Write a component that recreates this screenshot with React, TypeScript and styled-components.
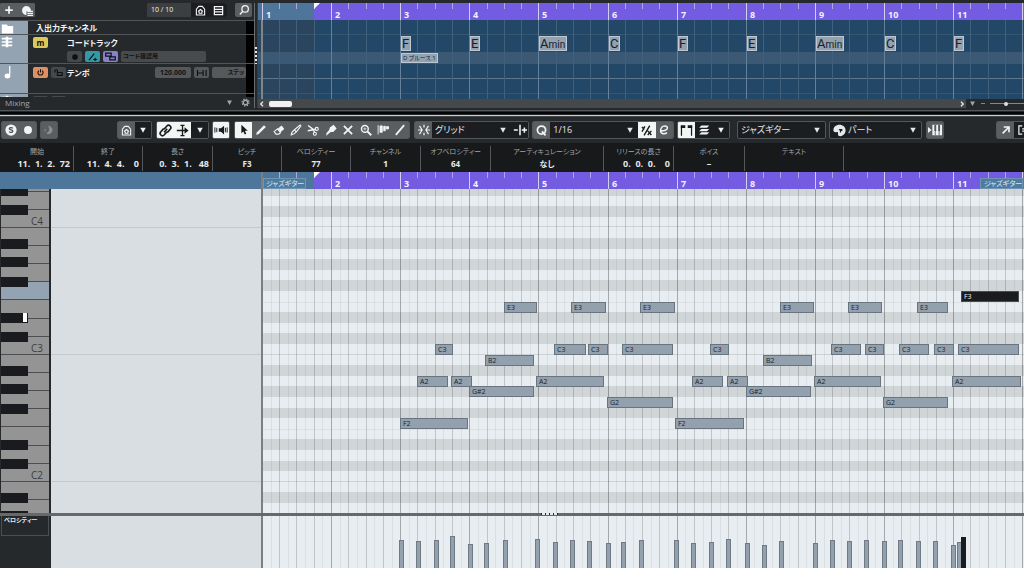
import React from "react";
import styled, { createGlobalStyle, css } from "styled-components";

const GlobalStyle = createGlobalStyle`
  * { box-sizing: border-box; }
  body {
    margin: 0;
    background: #25292c;
    font-family: "Open Sans", "Noto Sans CJK JP", sans-serif;
    font-feature-settings: "palt";
    color: #e6e8ea;
    overflow: hidden;
  }
  button, select, input { font: inherit; color: inherit; margin: 0; padding: 0; border: 0; }
`;

/* ---------- timeline data ---------- */

const BAR = 553 / 8;
const BAR_COUNT = 28;
const LAST_NAMED_BAR = 11;
const barX = (bar: number, origin: number) => Math.floor(262.4 + (bar - 1) * BAR - origin);
const rowTop = (pitch: number) => Math.round(155 - (pitch - 48) * 10.6);

const PITCH: Record<string, number> = { F2: 41, G2: 43, "G#2": 44, A2: 45, B2: 47, C3: 48, E3: 52, F3: 53 };

type NoteData = { name: string; x: number; w: number; vel: number; selected?: boolean };
const notes: NoteData[] = [
  { name: "F2", x: 137, w: 68, vel: 28 },
  { name: "A2", x: 154, w: 31, vel: 27 },
  { name: "C3", x: 172, w: 18, vel: 28 },
  { name: "A2", x: 188, w: 21, vel: 32 },
  { name: "G#2", x: 206, w: 65, vel: 24 },
  { name: "B2", x: 222, w: 49, vel: 25 },
  { name: "E3", x: 241, w: 33, vel: 28 },
  { name: "A2", x: 273, w: 68, vel: 29 },
  { name: "C3", x: 291, w: 32, vel: 26 },
  { name: "E3", x: 308, w: 35, vel: 28 },
  { name: "C3", x: 325, w: 20, vel: 27 },
  { name: "G2", x: 344, w: 66, vel: 25 },
  { name: "C3", x: 359, w: 51, vel: 26 },
  { name: "E3", x: 377, w: 35, vel: 28 },
  { name: "F2", x: 412, w: 69, vel: 28 },
  { name: "A2", x: 429, w: 31, vel: 25 },
  { name: "C3", x: 447, w: 19, vel: 26 },
  { name: "A2", x: 464, w: 21, vel: 29 },
  { name: "G#2", x: 483, w: 65, vel: 25 },
  { name: "B2", x: 500, w: 49, vel: 23 },
  { name: "E3", x: 517, w: 34, vel: 27 },
  { name: "A2", x: 551, w: 67, vel: 25 },
  { name: "C3", x: 568, w: 30, vel: 28 },
  { name: "E3", x: 585, w: 34, vel: 27 },
  { name: "C3", x: 602, w: 19, vel: 28 },
  { name: "G2", x: 620, w: 65, vel: 27 },
  { name: "C3", x: 636, w: 30, vel: 28 },
  { name: "E3", x: 654, w: 31, vel: 27 },
  { name: "C3", x: 671, w: 20, vel: 27 },
  { name: "A2", x: 689, w: 69, vel: 23 },
  { name: "C3", x: 695, w: 61, vel: 26 },
  { name: "F3", x: 698, w: 58, vel: 31, selected: true },
];

const chords = [
  { root: "F", bar: 3 },
  { root: "E", bar: 4 },
  { root: "A", kind: "min", bar: 5 },
  { root: "C", bar: 6 },
  { root: "F", bar: 7 },
  { root: "E", bar: 8 },
  { root: "A", kind: "min", bar: 9 },
  { root: "C", bar: 10 },
  { root: "F", bar: 11 },
];

const infoFields = [
  { label: "開始", value: "11.  1.  2.  72", w: 73, right: true },
  { label: "終了", value: "11.  4.  4.    0", w: 69, right: true },
  { label: "長さ", value: "0.  3.  1.   48", w: 70, right: true },
  { label: "ピッチ", value: "F3", w: 69, small: true },
  { label: "ベロシティー", value: "77", w: 69, small: true },
  { label: "チャンネル", value: "1", w: 70 },
  { label: "オフベロシティー", value: "64", w: 70, small: true },
  { label: "アーティキュレーション", value: "なし", w: 113, small: true },
  { label: "リリースの長さ", value: "0.  0.  0.    0", w: 70, right: true },
  { label: "ボイス", value: "–", w: 71 },
  { label: "テキスト", value: "", w: 99 },
];

/* ---------- icons ---------- */

const glyphs: Record<string, React.ReactNode> = {
  plus: <path d="M8 2v12M2 8h12" stroke="currentColor" strokeWidth="2.8" />,
  addTrack: (
    <>
      <path d="M8 2.5a5.5 5.5 0 1 0 0 11V9h5.400A5.500 5.500 0 0 0 8 2.500z" fill="currentColor" />
      <path d="M9 9h7M9 11.500h7M9 14h7" stroke="currentColor" strokeWidth="1.500" />
    </>
  ),
  house: <path d="M2 14.500V6l3.500-4h5L14 6v8.500zM4.500 9.500 8 6.500l3.500 3M6 9.500v2.500h4V9.500" fill="none" stroke="currentColor" strokeWidth="1.600" />,
  list: <path d="M2 2.500h12v11.500H2zM2 6.500h12M2 10h12" fill="none" stroke="currentColor" strokeWidth="1.800" />,
  search: (
    <>
      <circle cx="9.500" cy="6.500" r="4.300" fill="none" stroke="currentColor" strokeWidth="1.700" />
      <path d="M6.500 9.500 2.500 14" stroke="currentColor" strokeWidth="1.900" />
    </>
  ),
  folder: <path d="M1 3h6l1.500 2H15v9H1z" fill="currentColor" />,
  chordTrack: (
    <>
      <path d="M1 3.500h14M1 8h14M1 12.500h14" stroke="currentColor" strokeWidth="2.200" />
      <path d="M8 1v14" stroke="currentColor" strokeWidth="3.400" />
    </>
  ),
  tempo: <path d="M10 1v10M10 12.500a2.600 2.100 0 1 1-5.200 0 2.600 2.100 0 1 1 5.200 0z" fill="currentColor" stroke="currentColor" strokeWidth="1.400" />,
  dot: <circle cx="8" cy="8" r="4.500" fill="currentColor" />,
  solo: (
    <>
      <circle cx="8" cy="8" r="7.500" fill="currentColor" />
      <path d="M10.500 5.800C9.500 4.400 5.700 4.500 5.700 6.300c0 2 4.800 1.200 4.800 3.300 0 1.900-3.900 2-5 .5" fill="none" stroke="#4b4e51" strokeWidth="1.700" />
    </>
  ),
  moon: <path d="M7.500 3a5 5 0 1 1-2.500 9.500 6 6 0 0 0 2.500-9.500zM2.500 6.500a2.500 2.500 0 0 1 0 3.500" fill="currentColor" stroke="currentColor" />,
  link: <path d="M6.500 9.800 9.800 6.200M6.500 6.500 9.500 3.200a2.400 2.400 0 0 1 3.500 3.400L10 10M9.500 9.500l-3 3.300A2.400 2.400 0 0 1 3 9.400L6 6" fill="none" stroke="currentColor" strokeWidth="1.700" />,
  insert: (
    <>
      <path d="M1 8h10M5.500 1.800h5M5.500 14.200h5M8 2v12" stroke="currentColor" strokeWidth="1.600" fill="none" />
      <path d="M10.500 4 15.500 8l-5 4z" fill="currentColor" />
    </>
  ),
  speaker: (
    <>
      <path d="M5.500 6H8l3.500-3v10L8 10H5.500z" fill="currentColor" />
      <path d="M1 5v6M3.200 5.500v5M13 5.500v5M15 5v6" stroke="currentColor" strokeWidth="1.100" />
    </>
  ),
  arrow: <path d="M4.500 1v11.300l2.700-2.400 1.800 4 2-1-1.800-3.800h3.800z" fill="currentColor" />,
  pencil: <path d="m1.500 14.500 1.200-3.500L12 1.500 14.500 4 5 13.300z" fill="currentColor" />,
  eraser: (
    <>
      <path d="m6.500 6 5-4 3.500 4.500-5 4.500z" fill="currentColor" />
      <path d="m6 6.500-4.500 3.500L4 13.500h3.700l2.300-2z" fill="none" stroke="currentColor" strokeWidth="1.500" />
    </>
  ),
  knife: <path d="M1.500 14.500c.5-2.700 1.500-4.700 4-6.500L13.500 1.500l1 1.200-6 7.800c-2 2.200-4 3.500-7 4zM6 8l2.500 2.500" fill="none" stroke="currentColor" strokeWidth="1.500" />,
  scissors: (
    <>
      <path d="M1.500 2 10 8.500M1 9l11-2M8.500 8l1.500 3" stroke="currentColor" strokeWidth="1.900" />
      <circle cx="13" cy="6.500" r="2" fill="none" stroke="currentColor" strokeWidth="1.500" />
      <circle cx="10.500" cy="13" r="2" fill="none" stroke="currentColor" strokeWidth="1.500" />
    </>
  ),
  glue: <path d="m6.500 4.500 5-3.500 4 5-4.500 4.500H7.500L4 13.500 1.500 15.500l.500-3.500L5.500 8z" fill="currentColor" />,
  mute: <path d="m2.500 2.500 11 11M13.500 2.500l-11 11" stroke="currentColor" strokeWidth="2.400" />,
  zoom: (
    <>
      <circle cx="6.500" cy="6.500" r="4.500" fill="none" stroke="currentColor" strokeWidth="2" />
      <path d="m9.500 9.500 5.500 5.500" stroke="currentColor" strokeWidth="2.600" />
      <path d="M4.500 6.500h4M6.500 4.500v4" stroke="currentColor" />
    </>
  ),
  comp: <path d="M1.500 1.500v12.500M4 2.500h3v8.500H4zM9 3h2v6H9zM12.500 3.500h3v3h-3z" fill="currentColor" stroke="currentColor" strokeWidth="1.200" />,
  line: <path d="M2.500 14.500 13.500 1.500" stroke="currentColor" strokeWidth="2.400" />,
  snap: (
    <>
      <path d="M8 1v3.500M8 11.500V15" stroke="currentColor" strokeWidth="1.700" />
      <path d="M2 2.500 5.500 8 2 13.500M14 2.500 10.500 8l3.500 5.500M0 8h5M11 8h5" fill="none" stroke="currentColor" strokeWidth="1.600" />
    </>
  ),
  nudge: <path d="M8 2v12M1 8h4.500M10 8h6M13 5v6" stroke="currentColor" strokeWidth="1.800" />,
  quantize: <path d="M8 2.500a5 5 0 1 0 0 10 5 5 0 1 0 0-10zM8.500 9l4.500 5" fill="none" stroke="currentColor" strokeWidth="2.200" />,
  ratio: <path d="M2.500 3.500 5 7M2.500 9.500 6 3M12 2 5 14M9.500 8.500l4.500 5M14 8.500l-4.500 5" fill="none" stroke="currentColor" strokeWidth="1.700" />,
  edit: <path d="M3.500 9c4.500.5 9-1 9-3.800C12.500 3.500 11 2.500 9 2.500 6 2.500 3.500 5.200 3.500 8.800c0 4.500 5 5.500 8.500 2.700" fill="none" stroke="currentColor" strokeWidth="2" />,
  parts: (
    <>
      <path d="M1.800 2v12.500M14.200 2v12.500" stroke="currentColor" strokeWidth="1.500" />
      <path d="M1 1.500h5.500V5H1zM9.500 1.500H15V5H9.500z" fill="currentColor" />
    </>
  ),
  layers: <path d="m1.500 5 3-3h10.500l-3 3zM1.500 9.500l3-3h10.500l-3 3zM1.500 14l3-3h10.500l-3 3z" fill="currentColor" />,
  keys: (
    <>
      <path d="M0 4.500 4 8l-4 3.500z" fill="currentColor" />
      <path d="M5 2h11v12H5z" fill="currentColor" />
      <path d="M8.300 2v7M12.700 2v7" stroke="#55585b" strokeWidth="2.200" />
      <path d="M8.300 8v6M12.700 8v6" stroke="#55585b" />
    </>
  ),
  open: <path d="M3.500 12.500 11 5M5 4h7v7" fill="none" stroke="currentColor" strokeWidth="2.200" />,
  window: <path d="M7 2.500H2.500v11H7M7 6.500h7M7 9.500h7" fill="none" stroke="currentColor" strokeWidth="1.600" />,
  palette: <path d="M8 1C3.500 1 .5 4 .5 7.500c0 2.400 2 3.200 3.700 2.500 1.500-.6 2.300.4 2 1.700-.5 2 .8 3.500 3 3.300 3.400-.5 6.300-3.500 6.300-7C15.500 3.800 12.300 1 8 1zM7 6h4.500v2.500h-1.500v2H8.500v-2z" fill="currentColor" fillRule="evenodd" />,
  down: <path d="M2.500 3.500h11L8 13.500z" fill="currentColor" />,
  gear: (
    <>
      <circle cx="8" cy="8" r="4" fill="none" stroke="currentColor" strokeWidth="2.600" />
      <circle cx="8" cy="8" r="6.200" fill="none" stroke="currentColor" strokeWidth="2" strokeDasharray="2.600 2.270" />
    </>
  ),
  power: <path d="M5 4.500a4.600 4.600 0 1 0 6 0M8 2v6" fill="none" stroke="currentColor" strokeWidth="1.900" />,
  lock: <path d="M1.500 8V5.500a2.300 2.300 0 0 1 4.600 0V8M6 8h8.500v5H6z" fill="none" stroke="currentColor" strokeWidth="2" />,
  chordEdit: <path d="M1.500 13 10 2.500M8.500 12h6M11.500 9v5.500" stroke="currentColor" strokeWidth="1.800" />,
  voicing: <path d="M1 3h8v4.500H1zM7 8.500h8V13H7z" fill="none" stroke="currentColor" strokeWidth="1.700" />,
  range: <path d="M2 4v8M2 8h7M9.500 4v8M13.500 4v8" stroke="currentColor" strokeWidth="1.500" />,
  left: <path d="M10 3.500 5.500 8l4.500 4.500" fill="none" stroke="currentColor" strokeWidth="2.600" />,
  right: <path d="m6 3.500 4.500 4.500L6 12.500" fill="none" stroke="currentColor" strokeWidth="2.600" />,
};

const Svg = styled.svg<{ $s: number }>`
  width: ${(p) => p.$s}px;
  height: ${(p) => p.$s}px;
  flex: none;
  display: block;
`;
const Icon = ({ name, size = 12 }: { name: string; size?: number }) => (
  <Svg $s={size} viewBox="0 0 16 16" aria-hidden="true">{glyphs[name]}</Svg>
);

/* ---------- shared parts ---------- */

const Shell = styled.main`
  min-height: 100vh;
  display: flex;
  flex-direction: column;
  overflow: hidden;
`;

type Tone = "grey" | "dark" | "white";
const tones = {
  grey: css`background: #5b5e61; color: #f2f3f4;`,
  dark: css`background: #1b1d20; color: #f2f3f4;`,
  white: css`background: #f3f4f4; color: #17191b;`,
};
const Tool = styled.button<{ $tone?: Tone; $dim?: boolean }>`
  ${(p) => tones[p.$tone ?? "grey"]}
  ${(p) => p.$dim && css`color: #8e9194;`}
  flex: 1 1 18px;
  display: flex;
  align-items: center;
  justify-content: center;
`;
const Group = styled.div<{ $w: number; $before?: number }>`
  flex: none;
  display: flex;
  width: ${(p) => p.$w}px;
  height: 18px;
  margin-left: ${(p) => p.$before ?? 3}px;
  border: 1px solid #54575a;
  border-radius: 2px;
  overflow: hidden;
  background: #1b1d20;
`;

/* ---------- project zone ---------- */

const Project = styled.section`
  display: flex;
  height: 108px;
  padding-top: 3px;
  flex: none;
  background: #25292c;
`;
const TrackList = styled.div`
  width: 254px;
  flex: none;
  display: flex;
  flex-direction: column;
`;
const ListHeader = styled.header`
  height: 17px;
  display: flex;
  align-items: flex-start;
  padding-right: 2px;
`;
const HeaderGroup = styled.div<{ $w: number }>`
  display: flex;
  width: ${(p) => p.$w}px;
  height: 14px;
  background: #55585b;
  border-radius: 2px;
  overflow: hidden;
  color: #f0f1f2;
`;
const Counter = styled.span`
  width: 44px;
  padding-left: 4px;
  font-size: 7px;
  line-height: 14px;
  background: #3b3f42;
`;
const Spring = styled.div`flex: 1;`;
const Gap = styled.div`width: 8px;`;

const Rows = styled.div`
  flex: 1;
  min-height: 0;
  overflow: hidden;
  background: linear-gradient(to right, #25292c 246px, #000 246px);
`;
const TrackRow = styled.div<{ $h: number }>`
  display: flex;
  height: ${(p) => p.$h}px;
  border-top: 1px solid #515558;
`;
const Gutter = styled.div`
  width: 28px;
  padding: 1px 0 0 1px;
  background: #93a3b2;
  color: #fff;
`;
const TrackBody = styled.div<{ $pad?: number }>`
  flex: 1;
  display: grid;
  grid-template-columns: 34px 1fr;
  grid-auto-rows: min-content;
  row-gap: 3px;
  padding: ${(p) => p.$pad ?? 2}px 8px 0 5px;
  overflow: hidden;
`;
const TrackName = styled.span`
  font-size: 8px;
  font-weight: 700;
  line-height: 11px;
  white-space: nowrap;
  color: #f4f5f5;
`;
const FolderName = styled(TrackName)`
  padding: 1px 0 0 8px;
`;
const Line = styled.div`
  display: flex;
  gap: 3px;
  min-width: 0;
`;
const Chip = styled.button<{ $bg?: string }>`
  flex: none;
  width: 15px;
  height: 11px;
  display: flex;
  align-items: center;
  justify-content: center;
  background: ${(p) => p.$bg ?? "#46494c"};
  color: #0e0f10;
  border-radius: 2px;
  font-size: 8px;
  font-weight: 700;
  line-height: 11px;
`;
const Field = styled.input<{ $w: number; $align?: string }>`
  width: ${(p) => p.$w}px;
  flex: none;
  height: 11px;
  && { padding: 0 2px; }
  background: ${(p) => (p.$align ? "#56595c" : "#484b4e")};
  color: #121315;
  border-radius: 2px;
  font-size: ${(p) => (p.$align === "center" ? 7 : 6)}px;
  font-weight: 700;
  line-height: 11px;
  text-align: ${(p) => p.$align ?? "left"};
`;
const TempoLine = styled(Line)`
  justify-content: space-between;
`;
const ListFooter = styled.footer`
  height: 11px;
  display: flex;
  align-items: center;
  gap: 8px;
  padding: 0 4px 0 5px;
  font-size: 8px;
  line-height: 11px;
  color: #a4a7a9;
`;
const Splitter = styled.div`
  width: 4px;
  flex: none;
  border-left: 1px solid #696c6e;
  border-right: 1px solid #3a3d40;
  background: #25292c;
  padding-top: 44px;
`;
const Grip = styled.div`
  height: 17px;
  width: 2px;
  background: repeating-linear-gradient(#e5e5e5 0 2px, #25292c 2px 4px);
`;
const Arrange = styled.div`
  flex: 1;
  min-width: 0;
  display: flex;
  flex-direction: column;
`;

const RulerBox = styled.div`
  height: 17px;
  flex: none;
  overflow: hidden;
  background: #4e769b;
`;
const Drawing = styled.svg`
  display: block;
  width: 100%;
  height: 100%;
`;
const RulerText = styled.text`
  font-size: 9px;
  font-weight: 700;
  fill: #f3f1fb;
`;

const bars = Array.from({ length: BAR_COUNT }, (_, i) => i + 1);

const Ruler = ({ origin, hideFirst }: { origin: number; hideFirst?: boolean }) => (
  <RulerBox>
    <Drawing shapeRendering="crispEdges">
      <rect x={314 - origin} y="0" width="100%" height="17" fill="#735be2" />
      {bars.map((b) => (
        <g key={b}>
          <rect x={barX(b, origin)} y="0" width="1" height="17" fill="#d3cdf0" />
          {[0.25, 0.5, 0.75].map((q) => (
            <rect key={q} x={barX(b + q, origin)} y="0" width="1" height="6" fill="#aea6e6" />
          ))}
          {b <= LAST_NAMED_BAR && !(hideFirst && b === 1) && (
            <RulerText x={barX(b, origin) + 4} y="15">{b}</RulerText>
          )}
        </g>
      ))}
      <path d={`M${314 - origin} 0h6l-6 6z`} fill="#fff" shapeRendering="auto" />
    </Drawing>
  </RulerBox>
);

const Lanes = styled.div`
  position: relative;
  flex: 1;
  min-height: 0;
  overflow: hidden;
  background: #234767;
`;
const Chord = styled.div<{ $x: number }>`
  position: absolute;
  left: ${(p) => p.$x}px;
  top: 16px;
  height: 15px;
  padding: 0 1px 0 0;
  border: 1px solid #bdc8d2;
  background: #93a2b0;
  color: #15202a;
  font-size: 13px;
  line-height: 14px;
  font-family: Roboto, sans-serif;
`;
const ChordKind = styled.span`font-size: 10px;`;
const Scale = styled(Chord)`
  top: 33px;
  height: 10px;
  padding: 0 1px;
  font-size: 6px;
  line-height: 8px;
  font-family: "Open Sans", "Noto Sans CJK JP", sans-serif;
  white-space: nowrap;
`;
const ScrollRow = styled.div`
  height: 9px;
  flex: none;
  display: flex;
  align-items: center;
  color: #e8e9ea;
`;
const ScrollTrack = styled.div`
  flex: 1;
  height: 9px;
  display: flex;
  align-items: center;
  gap: 3px;
  background: #46494c;
`;
const Bare = styled.button`
  background: none;
  display: flex;
`;
const Thumb = styled.div`
  width: 23px;
  height: 6px;
  border-radius: 2px;
  background: #f1f1f1;
`;
const ZoomTools = styled.div`
  width: 58px;
  padding-left: 3px;
  display: flex;
  align-items: center;
  gap: 5px;
  color: #a4a7a9;
`;
const Minus = styled.span`
  width: 4px;
  height: 1px;
  background: #85888a;
`;
const Range = styled.input`
  appearance: none;
  flex: 1;
  min-width: 0;
  height: 1px;
  background: #85888a;
  &::-webkit-slider-thumb {
    appearance: none;
    width: 4px;
    height: 4px;
    border-radius: 2px;
    background: #e0e0e0;
  }
`;

const trackLines = [[14, "#365772"], [58, "#5d788c"], [73, "#365772"]] as const;

const ProjectZone = () => (
  <Project>
    <TrackList>
      <ListHeader>
        <HeaderGroup $w={35}>
          <Tool aria-label="Add track"><Icon name="plus" size={10} /></Tool>
          <Tool aria-label="Track preset"><Icon name="addTrack" size={13} /></Tool>
        </HeaderGroup>
        <Spring />
        <HeaderGroup $w={80}>
          <Counter>10 / 10</Counter>
          <Tool $tone="dark" aria-label="Home"><Icon name="house" size={11} /></Tool>
          <Tool $tone="dark" aria-label="List"><Icon name="list" size={11} /></Tool>
        </HeaderGroup>
        <Gap />
        <HeaderGroup $w={17}>
          <Tool aria-label="Search"><Icon name="search" size={12} /></Tool>
        </HeaderGroup>
      </ListHeader>
      <Rows>
        <TrackRow $h={14}>
          <Gutter><Icon name="folder" size={13} /></Gutter>
          <FolderName>入出力チャンネル</FolderName>
        </TrackRow>
        <TrackRow $h={29}>
          <Gutter><Icon name="chordTrack" size={12} /></Gutter>
          <TrackBody>
            <Chip $bg="#dcc75a">m</Chip>
            <TrackName>コードトラック</TrackName>
            <span />
            <Line>
              <Chip aria-label="Record"><Icon name="dot" size={10} /></Chip>
              <Chip $bg="#3499a5" aria-label="Edit chords"><Icon name="chordEdit" size={10} /></Chip>
              <Chip $bg="#8682c8" aria-label="Voicing"><Icon name="voicing" size={11} /></Chip>
              <Field $w={85} aria-label="Chord target" defaultValue="コード確認用" />
            </Line>
          </TrackBody>
        </TrackRow>
        <TrackRow $h={30}>
          <Gutter><Icon name="tempo" size={14} /></Gutter>
          <TrackBody $pad={3}>
            <Line>
              <Chip $bg="#e08f62" aria-label="Activate"><Icon name="power" size={9} /></Chip>
              <Chip aria-label="Lock"><Icon name="lock" size={9} /></Chip>
            </Line>
            <TempoLine>
              <TrackName>テンポ</TrackName>
              <Line>
                <Field $w={36} $align="center" aria-label="Tempo" defaultValue="120.000" />
                <Chip $bg="#56595c" aria-label="Range"><Icon name="range" size={12} /></Chip>
                <Field $w={34} $align="right" aria-label="Curve" defaultValue="ステッ" />
              </Line>
            </TempoLine>
          </TrackBody>
        </TrackRow>
        <TrackRow $h={10}>
          <Gutter><Icon name="chordTrack" size={12} /></Gutter>
          <TrackBody><Line><Chip /><Chip /></Line></TrackBody>
        </TrackRow>
      </Rows>
      <ListFooter>
        Mixing
        <Spring />
        <Icon name="down" size={7} />
        <Icon name="gear" size={9} />
      </ListFooter>
    </TrackList>
    <Splitter><Grip /></Splitter>
    <Arrange>
      <Ruler origin={258} />
      <Lanes>
        <Drawing shapeRendering="crispEdges">
          <rect width="56" height="100%" fill="#2b455f" />
          <rect y="32" width="100%" height="12" fill="#3b5875" />
          {trackLines.map(([y, c]) => <rect key={y} y={y} width="100%" height="1" fill={c} />)}
          {bars.map((b) => (
            <g key={b}>
              <rect x={barX(b, 258)} width="1" height="100%" fill="#64809a" />
              {[0.25, 0.5, 0.75].map((q) => (
                <rect key={q} x={barX(b + q, 258)} width="1" height="100%" fill="#41607c" />
              ))}
            </g>
          ))}
          <rect x="3" width="2" height="100%" fill="#7f8689" />
        </Drawing>
        {chords.map((c) => (
          <Chord key={c.bar} $x={barX(c.bar, 258) + 1}>
            {c.root}
            {c.kind && <ChordKind>{c.kind}</ChordKind>}
          </Chord>
        ))}
        <Scale $x={barX(3, 258) + 1}>D ブルース 1</Scale>
      </Lanes>
      <ScrollRow>
        <ScrollTrack>
          <Bare aria-label="Scroll left"><Icon name="left" size={8} /></Bare>
          <Thumb />
          <Spring />
          <Bare aria-label="Scroll right"><Icon name="right" size={8} /></Bare>
        </ScrollTrack>
        <ZoomTools>
          <Icon name="down" size={7} />
          <Minus />
          <Range type="range" aria-label="Zoom" defaultValue={45} />
        </ZoomTools>
      </ScrollRow>
    </Arrange>
  </Project>
);

const ZoneEdge = styled.div`
  height: 9px;
  flex: none;
  background: linear-gradient(#25292c 2px, #55595b 2px 3px, #25292c 3px 4px, #050505 4px 6px, #25292c 6px 7px, #c9cccc 7px 8px, #44484a 8px);
`;

/* ---------- editor toolbar ---------- */

const Toolbar = styled.div`
  height: 26px;
  flex: none;
  display: flex;
  padding: 4px 0 0 1px;
  background: #25292c;
`;
const Pick = styled.label<{ $w: number }>`
  flex: 0 0 ${(p) => p.$w}px;
  display: flex;
  align-items: center;
  gap: 2px;
  padding: 0 4px 0 3px;
`;
const Select = styled.select`
  appearance: none;
  flex: 1;
  min-width: 0;
  height: 16px;
  background: none;
  font-size: 9px;
  line-height: 16px;
`;
const Picker = ({ w, label, value, icon }: { w: number; label: string; value: string; icon?: string }) => (
  <Pick $w={w}>
    {icon && <Icon name={icon} size={13} />}
    <Select aria-label={label} defaultValue={value}>
      <option>{value}</option>
    </Select>
    <Icon name="down" size={8} />
  </Pick>
);

const editTools = ["pencil", "eraser", "knife", "scissors", "glue", "mute", "zoom", "comp", "line"];

const EditorToolbar = () => (
  <Toolbar>
    <Group $w={36} $before={0}>
      <Tool aria-label="Solo"><Icon name="solo" /></Tool>
      <Tool aria-label="Record"><Icon name="dot" size={14} /></Tool>
    </Group>
    <Group $w={18}><Tool $dim aria-label="Retrospective record"><Icon name="moon" /></Tool></Group>
    <Group $w={35} $before={59}>
      <Tool aria-label="Visibility"><Icon name="house" size={11} /></Tool>
      <Tool $tone="dark" aria-label="Visibility options"><Icon name="down" size={8} /></Tool>
    </Group>
    <Group $w={53} $before={4}>
      <Tool $tone="white" aria-label="Link"><Icon name="link" size={15} /></Tool>
      <Tool $tone="white" aria-label="Auto-scroll"><Icon name="insert" size={13} /></Tool>
      <Tool $tone="dark" aria-label="Auto-scroll options"><Icon name="down" size={8} /></Tool>
    </Group>
    <Group $w={18}><Tool $tone="white" aria-label="Acoustic feedback"><Icon name="speaker" size={14} /></Tool></Group>
    <Group $w={176} $before={4}>
      <Tool $tone="white" aria-label="Select"><Icon name="arrow" /></Tool>
      {editTools.map((t) => (
        <Tool key={t} aria-label={t}><Icon name={t} /></Tool>
      ))}
    </Group>
    <Group $w={115} $before={4}>
      <Tool aria-label="Snap"><Icon name="snap" /></Tool>
      <Picker w={79} label="Snap type" value="グリッド" />
      <Tool $tone="dark" aria-label="Nudge"><Icon name="nudge" size={14} /></Tool>
    </Group>
    <Group $w={142}>
      <Tool aria-label="Quantize"><Icon name="quantize" size={13} /></Tool>
      <Picker w={88} label="Quantize preset" value="1/16" />
      <Tool $tone="white" aria-label="Soft quantize"><Icon name="ratio" size={13} /></Tool>
      <Tool aria-label="Quantize panel"><Icon name="edit" /></Tool>
    </Group>
    <Group $w={53}>
      <Tool $tone="white" aria-label="Part borders"><Icon name="parts" size={13} /></Tool>
      <Tool $tone="dark" aria-label="Layers"><Icon name="layers" size={12} /></Tool>
      <Tool $tone="dark" aria-label="Layer options"><Icon name="down" size={8} /></Tool>
    </Group>
    <Group $w={89} $before={7}><Picker w={87} label="Part" value="ジャズギター" /></Group>
    <Group $w={93}><Picker w={91} label="Colors" value="パート" icon="palette" /></Group>
    <Group $w={18} $before={4}><Tool aria-label="Step input"><Icon name="keys" size={14} /></Tool></Group>
    <Group $w={36} $before={52}>
      <Tool aria-label="Open in window"><Icon name="open" /></Tool>
      <Tool $tone="dark" aria-label="Window layout"><Icon name="window" /></Tool>
    </Group>
  </Toolbar>
);

/* ---------- info line ---------- */

const InfoLine = styled.dl`
  margin: 0;
  height: 29px;
  flex: none;
  display: flex;
  padding-top: 3px;
  padding-left: 1px;
  background: #17191b;
`;
const InfoItem = styled.div<{ $w: number }>`
  flex: 0 0 ${(p) => p.$w}px;
  height: 25px;
  border-right: 1px solid #55585a;
  text-align: center;
  white-space: nowrap;
`;
const InfoLabel = styled.dt`
  font-size: 7px;
  line-height: 11px;
  color: #a2a4a6;
`;
const InfoValue = styled.dd<{ $right?: boolean; $small?: boolean }>`
  margin: 0;
  padding-right: ${(p) => (p.$right ? 3 : 0)}px;
  font-size: ${(p) => (p.$small ? 8 : 9)}px;
  font-weight: 700;
  line-height: 13px;
  white-space: pre;
  text-align: ${(p) => (p.$right ? "right" : "center")};
`;

/* ---------- key editor ---------- */

const RulerRow = styled.div`
  flex: none;
  display: flex;
  height: 17px;
  padding-left: 1px;
  background: #4e769b;
`;
const RulerBlank = styled.div`
  width: 260px;
  flex: none;
`;
const Divider = styled.div`
  width: 2px;
  flex: none;
  background: #7b7f80;
`;
const RulerMain = styled.div`
  position: relative;
  flex: 1;
  min-width: 0;
`;
const PartTag = styled.span<{ $end?: boolean }>`
  position: absolute;
  bottom: 0;
  ${(p) => (p.$end ? "right: 1px;" : "left: 0;")}
  width: 43px;
  height: 11px;
  padding-left: ${(p) => (p.$end ? 3 : 2)}px;
  border: 1px solid #7095b4;
  background: #4f7ba0;
  font-size: 7px;
  line-height: 9px;
  color: #dde6ee;
  white-space: nowrap;
`;
const Roll = styled.div`
  flex: 1;
  min-height: 324px;
  display: flex;
  overflow: hidden;
`;
const Keyboard = styled.div`
  width: 51px;
  flex: none;
  padding-left: 1px;
  border-right: 2px solid #25292c;
  background: #25292c;
`;
const KeyLabel = styled.text`
  font-size: 10px;
  fill: #3d3f41;
`;
const Side = styled.div`
  width: 210px;
  flex: none;
  overflow: hidden;
  background: #d8dee2;
`;
const Canvas = styled.div`
  position: relative;
  flex: 1;
  min-width: 0;
  overflow: hidden;
  background: #e8edf1;
  & > svg { position: absolute; inset: 0; }
`;
const Note = styled.div<{ $x: number; $y: number; $w: number; $on?: boolean }>`
  position: absolute;
  left: ${(p) => p.$x}px;
  top: ${(p) => p.$y}px;
  width: ${(p) => p.$w}px;
  height: 11px;
  padding-left: 2px;
  border: 1px solid ${(p) => (p.$on ? "#4a4c4f" : "#69747e")};
  background: ${(p) => (p.$on ? "#191b1e" : "#93a0ad")};
  color: ${(p) => (p.$on ? "#f0f0f0" : "#1d2329")};
  font-size: 7px;
  line-height: 10px;
`;

const BLACK = [1, 3, 6, 8, 10];
const BLACK_TOP: Record<number, number> = { 1: 22, 3: 41, 6: 77, 8: 97, 10: 115 };
const octaves = [60, 48, 36, 24, 12];
const labelled = [60, 48, 36];
const octaveBottom = (c: number) => Math.round(165 - ((c - 48) / 12) * 127.2);

const TimeLines = () => (
  <>
    {bars.map((b) => (
      <g key={b}>
        {[0.125, 0.375, 0.625, 0.875].map((q) => (
          <rect key={q} x={barX(b + q, 263)} width="1" height="100%" fill="#000" opacity=".06" />
        ))}
        {[0.25, 0.5, 0.75].map((q) => (
          <rect key={q} x={barX(b + q, 263)} width="1" height="100%" fill="#000" opacity=".17" />
        ))}
        <rect x={barX(b, 263)} width="1" height="100%" fill="#000" opacity=".29" />
      </g>
    ))}
  </>
);

const Keys = () => (
  <Drawing shapeRendering="crispEdges">
    <rect width="48" height="100%" fill="#949494" />
    {octaves.map((c) => {
      const bottom = octaveBottom(c);
      return (
        <g key={c}>
          {c === 48 && <rect y={bottom - 72} width="48" height="17" fill="#93a3b1" />}
          {[0, 1, 2, 3, 4, 5, 6].map((k) => (
            <rect key={k} y={bottom - Math.round(k * 18.17)} width="48" height="1" fill="#4d4e50" />
          ))}
          {BLACK.map((k) => (
            <rect key={k} y={bottom - BLACK_TOP[k]} width="27" height="10" fill="#191b1e" />
          ))}
          {c === 48 && <rect x="22" y={bottom - 41} width="4" height="9" fill="#fff" />}
          {labelled.includes(c) && <KeyLabel x="30" y={bottom - 2}>C{c / 12 - 1}</KeyLabel>}
        </g>
      );
    })}
  </Drawing>
);

const rows = Array.from({ length: 72 }, (_, i) => 71 - i);

const VelocityLane = styled.div`
  position: relative;
  height: 55px;
  flex: none;
  display: flex;
  border-top: 3px solid #66686a;
`;
const VelocityHead = styled.div`
  width: 51px;
  flex: none;
  padding: 0 2px 0 1px;
  background: #25292c;
`;
const VelocityLabel = styled.div`
  height: 20px;
  border: 1px solid #4b4f52;
  border-top: 0;
  padding: 0 2px;
  font-size: 6px;
  font-weight: 700;
  line-height: 9px;
  white-space: nowrap;
`;
const LaneGrip = styled.div`
  position: absolute;
  left: calc(50% + 29px);
  top: -3px;
  width: 17px;
  height: 2px;
  background: repeating-linear-gradient(to right, #25292c 0 1px, #e8e8e8 1px 4px);
`;

const Editor = () => (
  <>
    <RulerRow>
      <RulerBlank />
      <Divider />
      <RulerMain>
        <Ruler origin={263} hideFirst />
        <PartTag>ジャズギター</PartTag>
        <PartTag $end>ジャズギター</PartTag>
      </RulerMain>
    </RulerRow>
    <Roll>
      <Keyboard><Keys /></Keyboard>
      <Side>
        <Drawing shapeRendering="crispEdges">
          {octaves.map((c) => <rect key={c} y={octaveBottom(c)} width="100%" height="1" fill="#c3c9cd" />)}
        </Drawing>
      </Side>
      <Divider />
      <Canvas>
        <Drawing shapeRendering="crispEdges">
          {rows.map((p) =>
            BLACK.includes(p % 12) ? (
              <rect key={p} y={rowTop(p)} width="100%" height={rowTop(p - 1) - rowTop(p)} fill="#d0d5d8" />
            ) : p % 12 === 0 ? (
              <rect key={p} y={rowTop(p - 1) - 1} width="100%" height="1" fill="#cdd2d5" />
            ) : p % 12 === 5 ? (
              <rect key={p} y={rowTop(p - 1)} width="100%" height="1" fill="#dde2e5" />
            ) : null
          )}
          <TimeLines />
        </Drawing>
        {notes.map((n, i) => (
          <Note key={i} $x={n.x} $y={rowTop(PITCH[n.name])} $w={n.w} $on={n.selected}>{n.name}</Note>
        ))}
      </Canvas>
    </Roll>
    <VelocityLane>
      <VelocityHead><VelocityLabel>ベロシティー</VelocityLabel></VelocityHead>
      <Side />
      <Divider />
      <Canvas>
        <Drawing shapeRendering="crispEdges">
          <TimeLines />
          {notes.map((n, i) => (
            <g key={i}>
              <rect x={n.selected ? n.x : n.x - 1} y={52 - n.vel} width="5" height={n.vel} fill={n.selected ? "#191b1e" : "#6f7a84"} />
              {!n.selected && <rect x={n.x} y={53 - n.vel} width="3" height={n.vel} fill="#93a0ad" />}
            </g>
          ))}
        </Drawing>
      </Canvas>
      <LaneGrip />
    </VelocityLane>
  </>
);

export default function App() {
  return (
    <Shell>
      <GlobalStyle />
      <ProjectZone />
      <ZoneEdge />
      <EditorToolbar />
      <InfoLine>
        {infoFields.map((f) => (
          <InfoItem key={f.label} $w={f.w}>
            <InfoLabel>{f.label}</InfoLabel>
            <InfoValue $right={f.right} $small={f.small}>{f.value}</InfoValue>
          </InfoItem>
        ))}
      </InfoLine>
      <Editor />
    </Shell>
  );
}
